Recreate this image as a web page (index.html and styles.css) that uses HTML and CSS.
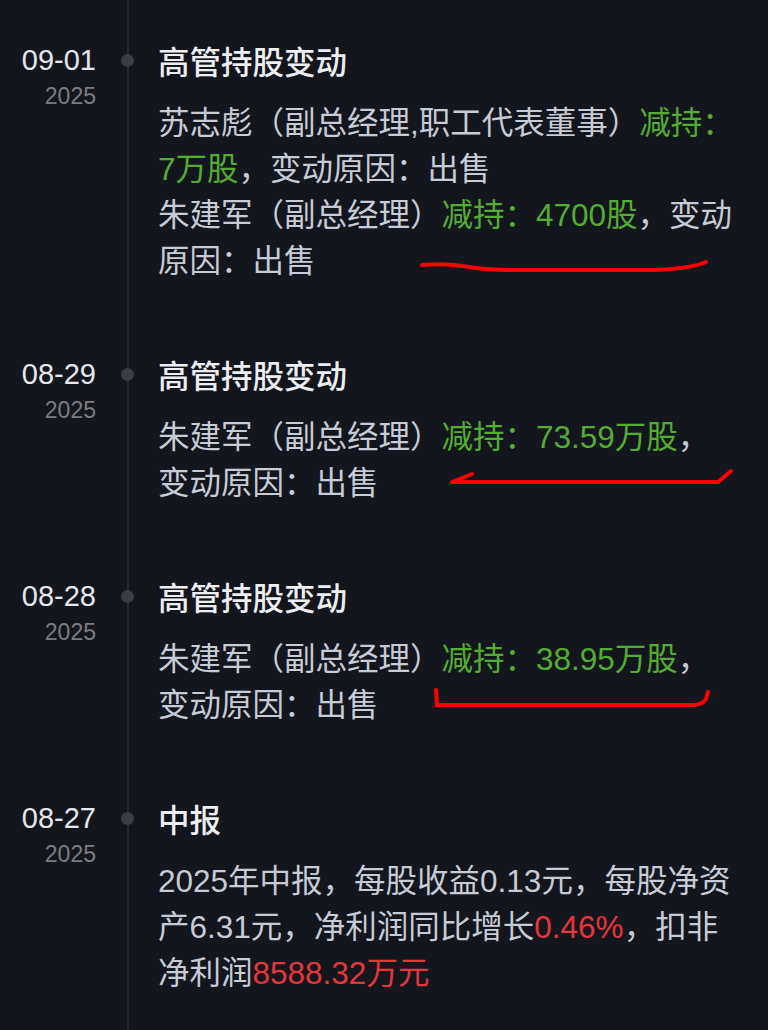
FILE: index.html
```html
<!DOCTYPE html>
<html lang="zh-CN">
<head>
    <meta charset="UTF-8">
    <meta name="viewport" content="width=device-width, initial-scale=1.0">
    <title>公司大事</title>
    <link rel="stylesheet" href="styles.css">
</head>
<body>
    <div class="timeline">
        <div class="event">
            <div class="event-date">
                <div class="day">09-01</div>
                <div class="year">2025</div>
            </div>
            <div class="event-body">
                <h3>高管持股变动</h3>
                <p>苏志彪（副总经理,职工代表董事）<span class="down">减持：7万股</span>，变动原因：出售</p>
                <p>朱建军（副总经理）<span class="down">减持：4700股</span>，变动原因：出售</p>
            </div>
        </div>

        <div class="event">
            <div class="event-date">
                <div class="day">08-29</div>
                <div class="year">2025</div>
            </div>
            <div class="event-body">
                <h3>高管持股变动</h3>
                <p>朱建军（副总经理）<span class="down">减持：73.59万股</span>，变动原因：出售</p>
            </div>
        </div>

        <div class="event">
            <div class="event-date">
                <div class="day">08-28</div>
                <div class="year">2025</div>
            </div>
            <div class="event-body">
                <h3>高管持股变动</h3>
                <p>朱建军（副总经理）<span class="down">减持：38.95万股</span>，变动原因：出售</p>
            </div>
        </div>

        <div class="event">
            <div class="event-date">
                <div class="day">08-27</div>
                <div class="year">2025</div>
            </div>
            <div class="event-body">
                <h3>中报</h3>
                <p>2025年中报，每股收益0.13元，每股净资产6.31元，净利润同比增长<span class="up">0.46%</span>，扣非净利润<span class="up">8588.32万元</span></p>
            </div>
        </div>
    </div>

    <!-- 手绘标记 -->
    <svg class="marks" width="768" height="1030" viewBox="0 0 768 1030">
        <path d="M422 265 C436 264 450 264 462 266 S490 270 510 270 L655 270 C680 269 695 267 706 262"/>
        <path d="M472 474 L452 482 L718 482 L731 471"/>
        <path d="M436 690 L437 705 L695 705 Q703 704 706 699 L708 692"/>
    </svg>
</body>
</html>
```

FILE: styles.css
```css
body {
    margin: 0;
    padding: 0;
    background-color: #14161e;
    color: #c6cbd5;
    font-family: 'Liberation Sans', 'Noto Sans CJK SC', sans-serif;
    position: relative;
    overflow: hidden;
}
.timeline {
    display: flex;
    flex-direction: column;
    min-height: 100vh;
}
.event {
    display: grid;
    grid-template-columns: 127px 1fr;
}
.event:last-child {
    flex: 1;
}
.event-date {
    padding: 44px 31px 0 0;
    text-align: right;
}
.day {
    font-size: 29px;
    line-height: 32px;
    color: #e6e7ea;
}
.year {
    margin-top: 7px;
    font-size: 23px;
    line-height: 26px;
    color: #7b7c82;
}
.event-body {
    position: relative;
    border-left: 2px solid #262932;
    padding: 40px 31px 30px 29px;
}
.event-body::before {
    content: '';
    position: absolute;
    left: -8px;
    top: 54px;
    width: 13px;
    height: 13px;
    border-radius: 50%;
    background-color: #3a3d48;
}
.event-body h3 {
    margin: 0 0 14px;
    font-size: 31.5px;
    line-height: 46px;
    font-weight: 500;
    color: #eceef2;
}
.event-body p {
    margin: 0;
    font-size: 31.5px;
    line-height: 46px;
}
.down {
    color: #52ad30;
}
.up {
    color: #e5373a;
}
.marks {
    position: absolute;
    top: 0;
    left: 0;
    pointer-events: none;
}
.marks path {
    fill: none;
    stroke: #ff0000;
    stroke-width: 4;
    stroke-linecap: round;
    stroke-linejoin: round;
}
```
